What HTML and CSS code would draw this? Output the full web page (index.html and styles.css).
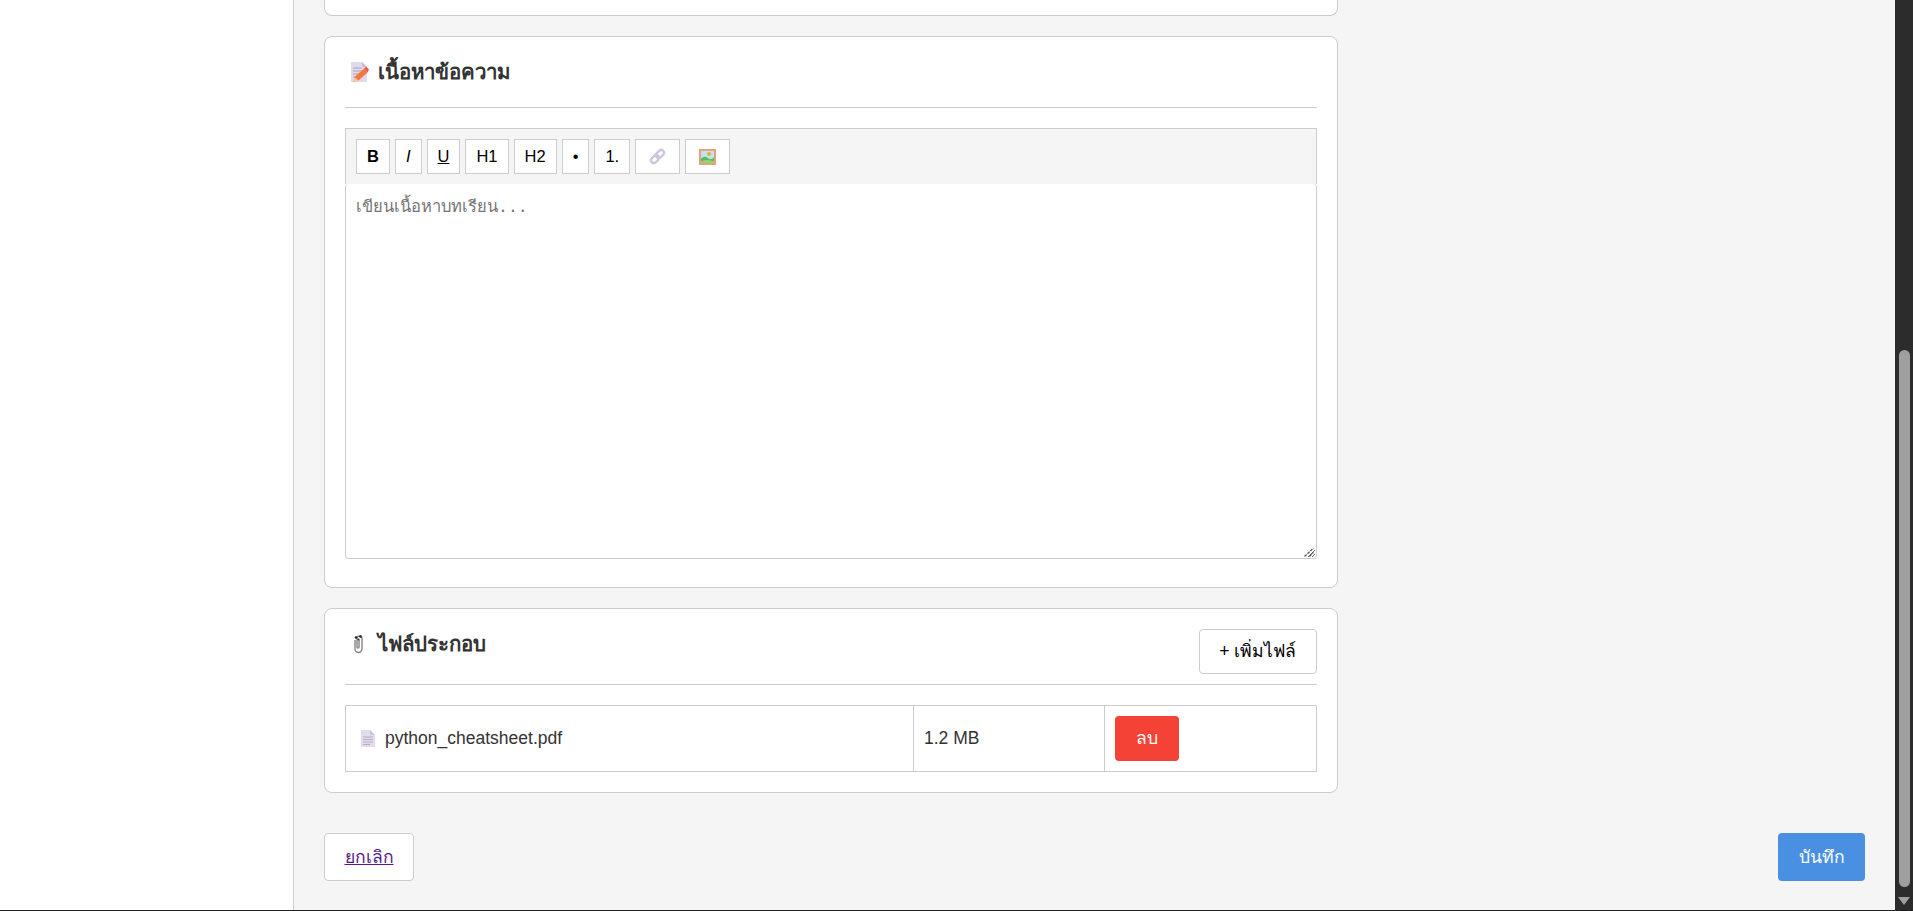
FILE: index.html
```html
<!DOCTYPE html>
<html lang="th">
<head>
<meta charset="utf-8">
<title>แก้ไขบทเรียน</title>
<link rel="stylesheet" href="styles.css">
</head>
<body>
<div class="window">
  <div class="app">
    <aside class="sidebar"></aside>
    <main class="main">
      <div class="card-tail"></div>
      <section class="card card-content">
        <div class="card-head">
          <h3 class="card-title">
            <svg class="icon-memo" width="18" height="20" viewBox="0 0 18 20"><path d="M0 0H11L16 5V20H0Z" fill="#e2daec"/><path d="M11 0L16 5H11Z" fill="#c6bdd4"/><path d="M2 6H11M2 9H12M2 12H9M2 15H5" stroke="#aaa4b6" stroke-width="1"/><path d="M3.5 15L13 6.5L16.5 10.5L7.5 18.5L2.5 20Z" fill="#f4793b"/><path d="M13 6.5L15 4.5L18 7.5L16.5 10.5Z" fill="#ee5a4a"/><path d="M3.5 15L7.5 18.5L2.5 20Z" fill="#f9c9a0"/></svg>
            เนื้อหาข้อความ
          </h3>
        </div>
        <div class="toolbar">
          <button class="tool tool-b" type="button">B</button>
          <button class="tool tool-i" type="button">I</button>
          <button class="tool tool-u" type="button">U</button>
          <button class="tool" type="button">H1</button>
          <button class="tool" type="button">H2</button>
          <button class="tool" type="button">•</button>
          <button class="tool" type="button">1.</button>
          <button class="tool tool-icon" type="button" aria-label="ลิงก์">
            <svg width="17" height="17" viewBox="0 0 17 17"><g fill="none" stroke="#cfc6dc" stroke-width="2.4"><rect x="1.5" y="8.2" width="9" height="5.6" rx="2.8" transform="rotate(-45 6 11)"/><rect x="6.5" y="3.2" width="9" height="5.6" rx="2.8" transform="rotate(-45 11 6)"/></g></svg>
          </button>
          <button class="tool tool-icon" type="button" aria-label="รูปภาพ">
            <svg width="17" height="16" viewBox="0 0 17 16"><rect width="17" height="16" fill="#e2a27a"/><rect x="2" y="2" width="13" height="12" fill="#bfe3f4"/><circle cx="10" cy="4.8" r="1.9" fill="#f5a623"/><path d="M2 14V9.5Q5.5 6.5 8.5 9T15 8.5V14Z" fill="#5cba5c"/><path d="M2 14V12.2Q8 10 15 12.2V14Z" fill="#8fd46f"/></svg>
          </button>
        </div>
        <div class="editor-wrap">
          <textarea class="editor" placeholder="เขียนเนื้อหาบทเรียน..."></textarea>
          <svg class="grip" width="10" height="10" viewBox="0 0 10 10"><path d="M0.5 9.5L9.5 1M5.5 9.5L9.5 5.5" stroke="#555" stroke-width="1.2" stroke-dasharray="3 1" fill="none"/></svg>
        </div>
      </section>
      <section class="card card-files">
        <div class="card-head">
          <h3 class="card-title">
            <svg class="icon-clip" width="11" height="20" viewBox="0 0 11 20"><path d="M2 6V15a3.5 3.5 0 0 0 7 0V4.5a2.5 2.5 0 0 0-5 0V13a1 1 0 0 0 2 0V6" fill="none" stroke="#858585" stroke-width="1.4"/><circle cx="3" cy="3.5" r="1.3" fill="#222"/><circle cx="7.5" cy="2.5" r="1.3" fill="#222"/><circle cx="5.5" cy="5.5" r="1.1" fill="#333"/></svg>
            ไฟล์ประกอบ
          </h3>
          <button class="btn btn-add" type="button">+ เพิ่มไฟล์</button>
        </div>
        <table class="files">
          <tr>
            <td class="col-name">
              <span class="file">
                <svg class="icon-doc" width="14" height="17" viewBox="0 0 14 17"><path d="M0 0H9L14 5V17H0Z" fill="#e3dcef"/><path d="M9 0L14 5H9Z" fill="#cdc4db"/><path d="M2 7H12M2 9.5H12M2 12H12M2 14.5H9" stroke="#b5aec3" stroke-width="1"/></svg>
                python_cheatsheet.pdf
              </span>
            </td>
            <td class="col-size">1.2 MB</td>
            <td><button class="btn btn-delete" type="button">ลบ</button></td>
          </tr>
        </table>
      </section>
      <div class="actions">
        <a class="btn btn-cancel" href="#">ยกเลิก</a>
        <button class="btn btn-save" type="button">บันทึก</button>
      </div>
    </main>
    <div class="scrollbar">
      <div class="scroll-thumb"></div>
      <div class="scroll-arrow"></div>
    </div>
  </div>
  <div class="window-edge"></div>
</div>
</body>
</html>
```
FILE: styles.css
```css
* { box-sizing: border-box; }
html, body { margin: 0; height: 100%; overflow: hidden; }
body { font-family: "Liberation Sans", Arial, sans-serif; color: #333; font-size: 17.6px; }
.window { height: 911px; display: flex; flex-direction: column; }
.app { flex: 1; min-height: 0; display: flex; background: #f5f5f5; }
.window-edge { height: 1px; background: #222; }
.sidebar { width: 294px; flex: none; background: #fff; border-right: 1px solid #ccc; }
.main { flex: 1; min-width: 0; padding: 0 30px; }
.card-tail { width: 1014px; height: 16px; background: #fff; border: 1px solid #ccc; border-top: 0; border-radius: 0 0 8px 8px; margin-bottom: 20px; }
.card { width: 1014px; background: #fff; border: 1px solid #ccc; border-radius: 8px; padding: 20px; margin-bottom: 20px; }
.card-head { display: flex; justify-content: space-between; align-items: flex-start; border-bottom: 1px solid #ccc; padding-bottom: 10px; margin-bottom: 20px; }
.card-title { display: flex; align-items: center; margin: 0 0 10px; font-size: 20.4px; line-height: 30px; font-weight: 700; color: #333; }
.icon-memo { margin: 0 9px 0 6px; }
.icon-clip { margin: 0 14px 0 8px; }
.toolbar { display: flex; gap: 5px; padding: 10px; background: #f5f5f5; border: 1px solid #ccc; border-bottom: 0; }
.tool { height: 35px; padding: 5px 10px; background: #fff; border: 1px solid #ccc; border-radius: 0; font: 16.5px "Liberation Sans", Arial, sans-serif; color: #000; }
.tool-b { font-weight: 700; }
.tool-i { font-style: italic; }
.tool-u { text-decoration: underline; }
.tool-icon { display: flex; align-items: center; padding: 0 13px; }
.editor-wrap { position: relative; margin-bottom: 8px; }
.editor { display: block; width: 100%; height: 375px; padding: 9px 10px 10px; border: 1px solid #ccc; border-top: 0; border-radius: 4px; font-size: 16.5px; background: #fff; outline: 0; }
.grip { position: absolute; right: 3px; bottom: 2px; pointer-events: none; }
.btn { display: inline-block; padding: 10px 19.5px; border-radius: 4px; border: 1px solid #ccc; background: #fff; color: #000; font-family: "Liberation Sans", Arial, sans-serif; font-size: 17.6px; line-height: 23px; font-weight: 500; }
.btn-delete { padding: 11px 21px; background: #f44336; border: 0; color: #fff; }
.files { width: 100%; border-collapse: collapse; }
.files td { border: 1px solid #ccc; padding: 10px; color: #333; font-size: 17.5px; }
.col-name { width: 568px; }
.col-size { width: 191px; }
.file { display: flex; align-items: center; }
.icon-doc { margin: 0 10px 0 5px; }
.actions { display: flex; justify-content: space-between; margin-top: 40px; }
.btn-cancel { padding: 12px 19.5px; line-height: 22px; color: #551a8b; text-decoration: underline; }
.btn-save { padding: 12px 20.5px; line-height: 24px; background: #4a90e2; border: 0; color: #fff; }
.scrollbar { width: 18px; flex: none; background: #2c2c2c; position: relative; }
.scroll-thumb { position: absolute; left: 4px; right: 3px; top: 350px; bottom: 23px; background: #9f9f9f; border-radius: 6px; }
.scroll-arrow { position: absolute; left: 3px; bottom: 5px; width: 0; height: 0; border-left: 6px solid transparent; border-right: 6px solid transparent; border-top: 8px solid #9f9f9f; }
```
